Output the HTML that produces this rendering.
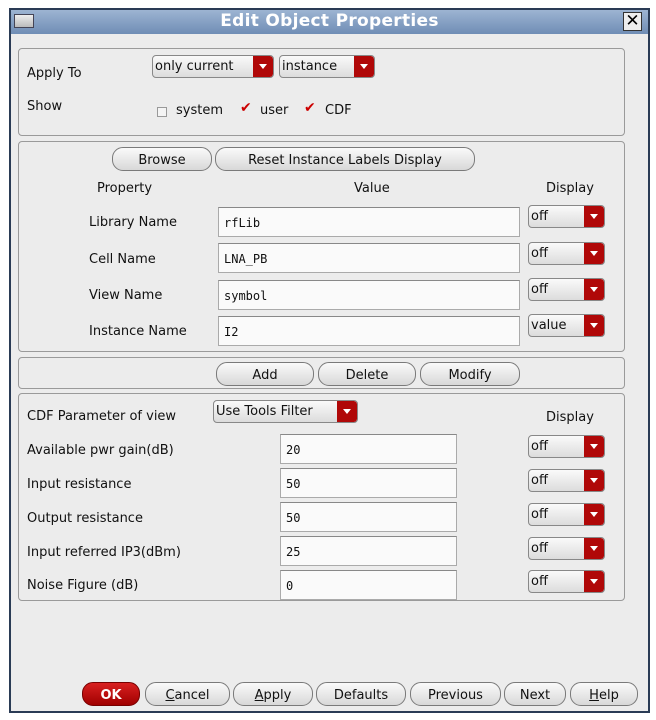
<!DOCTYPE html>
<html><head><style>
*{box-sizing:border-box;margin:0;padding:0}
body{width:656px;height:720px;background:#fff;position:relative;overflow:hidden;font-family:"DejaVu Sans","Liberation Sans",sans-serif;font-size:13px;color:#111}
.a{position:absolute}
.l{margin-top:2px}
.win{left:9px;top:8px;width:641px;height:705px;border:2px solid #2a3b55;background:#ececec}
.title{left:11px;top:10px;width:637px;height:24px;background:linear-gradient(#9db4d2,#6f8db5);color:#fff;font-weight:bold;font-size:17px;text-align:center;line-height:22px;letter-spacing:.3px}
.grp{border:1px solid #9a9a9a;border-radius:4px;background:#ececec}
.btn{border:1px solid #7a7a7a;border-radius:11px;background:linear-gradient(#fafafa,#d8d8d8);text-align:center;line-height:25px;height:24px;font-size:13px}
.dd{border:1px solid #888;border-radius:4px;background:linear-gradient(#fafafa,#dcdcdc);height:23px;line-height:22px;padding-left:2px;font-size:13px;overflow:hidden}
.dd i{position:absolute;right:0;top:0;bottom:0;width:20px;background:#b00808;border-radius:0 3px 3px 0}
.dd i:after{content:"";position:absolute;left:6px;top:8px;border:4px solid transparent;border-top:5px solid #fff}
.fld{border:1px solid #aaa;border-top-color:#888;background:#fafafa;height:30px;line-height:30px;padding-left:5px;font-family:"DejaVu Sans Mono","Liberation Mono",monospace;font-size:12px}
.cb{width:10px;height:10px;border:1px solid #999;background:#f4f4f4}
.ck{color:#c00;font-weight:bold;font-size:14px}
</style></head><body>
<div class="a win"></div>
<div class="a title">Edit Object Properties</div>
<div class="a" style="left:14px;top:14px;width:20px;height:14px;border:1px solid #445;background:linear-gradient(#eee,#bbb)"></div>
<div class="a" style="left:623px;top:12px;width:19px;height:19px;border:1px solid #333;background:#eee;color:#000;font-size:17px;line-height:17px;text-align:center;font-family:'DejaVu Sans'">✕</div>

<div class="a grp" style="left:18px;top:48px;width:607px;height:88px"></div>
<div class="a" style="left:27px;top:66px">Apply To</div>
<div class="a dd" style="left:152px;top:55px;width:122px">only current<i></i></div>
<div class="a dd" style="left:279px;top:55px;width:96px">instance<i></i></div>
<div class="a" style="left:27px;top:99px">Show</div>
<div class="a cb" style="left:157px;top:107px"></div><div class="a" style="left:176px;top:103px">system</div>
<div class="a ck" style="left:240px;top:100px">✔</div><div class="a" style="left:260px;top:103px">user</div>
<div class="a ck" style="left:304px;top:100px">✔</div><div class="a" style="left:325px;top:103px">CDF</div>

<div class="a grp" style="left:18px;top:141px;width:607px;height:211px"></div>
<div class="a btn" style="left:112px;top:147px;width:100px">Browse</div>
<div class="a btn" style="left:215px;top:147px;width:260px">Reset Instance Labels Display</div>
<div class="a" style="left:97px;top:181px">Property</div>
<div class="a" style="left:354px;top:181px">Value</div>
<div class="a" style="left:546px;top:181px">Display</div>
<div class="a" style="left:89px;top:215px">Library Name</div>
<div class="a" style="left:89px;top:252px">Cell Name</div>
<div class="a" style="left:89px;top:288px">View Name</div>
<div class="a" style="left:89px;top:324px">Instance Name</div>
<div class="a fld" style="left:218px;top:207px;width:302px">rfLib</div>
<div class="a fld" style="left:218px;top:243px;width:302px">LNA_PB</div>
<div class="a fld" style="left:218px;top:280px;width:302px">symbol</div>
<div class="a fld" style="left:218px;top:316px;width:302px">I2</div>
<div class="a dd" style="left:528px;top:205px;width:77px">off<i></i></div>
<div class="a dd" style="left:528px;top:242px;width:77px">off<i></i></div>
<div class="a dd" style="left:528px;top:278px;width:77px">off<i></i></div>
<div class="a dd" style="left:528px;top:314px;width:77px">value<i></i></div>

<div class="a grp" style="left:18px;top:357px;width:607px;height:32px"></div>
<div class="a btn" style="left:216px;top:362px;width:98px">Add</div>
<div class="a btn" style="left:318px;top:362px;width:98px">Delete</div>
<div class="a btn" style="left:420px;top:362px;width:100px">Modify</div>

<div class="a grp" style="left:18px;top:393px;width:607px;height:208px"></div>
<div class="a" style="left:27px;top:409px">CDF Parameter of view</div>
<div class="a dd" style="left:213px;top:400px;width:145px">Use Tools Filter<i></i></div>
<div class="a" style="left:546px;top:410px">Display</div>
<div class="a" style="left:27px;top:443px">Available pwr gain(dB)</div>
<div class="a" style="left:27px;top:477px">Input resistance</div>
<div class="a" style="left:27px;top:511px">Output resistance</div>
<div class="a" style="left:27px;top:545px">Input referred IP3(dBm)</div>
<div class="a" style="left:27px;top:578px">Noise Figure (dB)</div>
<div class="a fld" style="left:280px;top:434px;width:177px">20</div>
<div class="a fld" style="left:280px;top:468px;width:177px">50</div>
<div class="a fld" style="left:280px;top:502px;width:177px">50</div>
<div class="a fld" style="left:280px;top:536px;width:177px">25</div>
<div class="a fld" style="left:280px;top:570px;width:177px">0</div>
<div class="a dd" style="left:528px;top:435px;width:77px">off<i></i></div>
<div class="a dd" style="left:528px;top:469px;width:77px">off<i></i></div>
<div class="a dd" style="left:528px;top:503px;width:77px">off<i></i></div>
<div class="a dd" style="left:528px;top:537px;width:77px">off<i></i></div>
<div class="a dd" style="left:528px;top:570px;width:77px">off<i></i></div>

<div class="a btn" style="left:82px;top:682px;width:58px;background:linear-gradient(#d82020,#a00000);color:#fff;font-weight:bold;border-color:#700">OK</div>
<div class="a btn" style="left:145px;top:682px;width:85px"><u>C</u>ancel</div>
<div class="a btn" style="left:233px;top:682px;width:80px"><u>A</u>pply</div>
<div class="a btn" style="left:316px;top:682px;width:90px">Defaults</div>
<div class="a btn" style="left:410px;top:682px;width:91px">Previous</div>
<div class="a btn" style="left:504px;top:682px;width:62px">Next</div>
<div class="a btn" style="left:570px;top:682px;width:68px"><u>H</u>elp</div>
</body></html>
